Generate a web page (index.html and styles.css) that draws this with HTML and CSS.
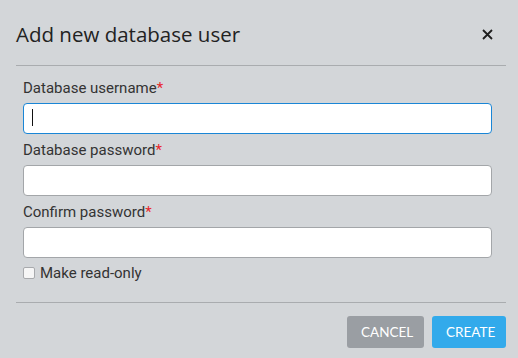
FILE: index.html
```html
<!DOCTYPE html>
<html lang="en">
<head>
    <meta charset="UTF-8">
    <meta name="viewport" content="width=device-width, initial-scale=1.0">
    <title>Add new database user</title>
    <link rel="stylesheet" href="styles.css">
</head>
<body>
    <div class="modal">
        <!-- Cabecera -->
        <div class="modal-header">
            <h2 class="modal-title">Add new database user</h2>
            <button type="button" class="close-btn" aria-label="Close">
                <svg width="11" height="11" viewBox="0 0 11 11">
                    <path d="M1 1 L10 10 M10 1 L1 10" stroke="#1e1e1e" stroke-width="1.8" fill="none"/>
                </svg>
            </button>
        </div>

        <form class="modal-body">
            <div class="input-group">
                <label for="username">Database username<span class="req">*</span></label>
                <input type="text" id="username" class="field focused">
                <span class="caret"></span>
            </div>
            <div class="input-group">
                <label for="password">Database password<span class="req">*</span></label>
                <input type="password" id="password" class="field">
            </div>
            <div class="input-group">
                <label for="confirm">Confirm password<span class="req">*</span></label>
                <input type="password" id="confirm" class="field">
            </div>
            <label class="check">
                <span class="box"></span>
                Make read-only
            </label>
        </form>

        <div class="modal-footer">
            <button type="button" class="btn btn-cancel">CANCEL</button>
            <button type="button" class="btn btn-create">CREATE</button>
        </div>
    </div>
</body>
</html>
```

FILE: styles.css
```css
body {
    margin: 0;
    background: #d3d6d9;
    font-family: Roboto, "Liberation Sans", sans-serif;
}

.modal {
    padding: 0 12px 0 16px;
}

.modal-header {
    height: 65px;
    display: flex;
    align-items: center;
    justify-content: space-between;
    border-bottom: 1px solid #a9acaf;
}

.modal-title {
    margin: 0;
    padding-top: 2px;
    font-family: "Open Sans", sans-serif;
    font-weight: 400;
    font-size: 20.5px;
    color: #222;
}

.close-btn {
    background: none;
    border: none;
    padding: 0;
    margin: 4px 13px 0 0;
    width: 11px;
    height: 11px;
    display: flex;
    cursor: pointer;
}

.modal-body {
    padding: 14px 14px 0 7px;
    height: 236px;
    box-sizing: border-box;
}

.input-group {
    position: relative;
    margin-bottom: 8px;
}

.input-group label {
    display: block;
    font-size: 15px;
    line-height: 17px;
    color: #333;
    margin-bottom: 6px;
}

.req {
    color: #e8262b;
}

.field {
    display: block;
    width: 100%;
    height: 31px;
    box-sizing: border-box;
    border: 1px solid #a3a6a9;
    border-radius: 4px;
    background: #fff;
    font-size: 14px;
    padding: 0 8px;
    outline: none;
}

.field.focused {
    border-color: #1a86d6;
}

.caret {
    position: absolute;
    left: 9px;
    top: 29px;
    width: 1px;
    height: 17px;
    background: #111;
}

.check {
    display: flex;
    align-items: center;
    gap: 5px;
    font-size: 15px;
    color: #333;
    margin-top: -2px;
}

.box {
    width: 10px;
    height: 10px;
    border: 1px solid #a8aaad;
    border-radius: 2px;
    background: #f6f6f6;
}

.modal-footer {
    border-top: 1px solid #a9acaf;
    display: flex;
    justify-content: flex-end;
    gap: 8px;
    padding-top: 13px;
}

.btn {
    height: 32px;
    border: none;
    border-radius: 3px;
    color: #fff;
    font-family: Lato, "Open Sans", sans-serif;
    font-size: 13.5px;
    padding: 0 14px;
    cursor: pointer;
}

.btn-cancel {
    background-color: #9a9ea3;
    width: 77px;
}

.btn-create {
    background-color: #32aaeb;
    width: 74px;
}
```
